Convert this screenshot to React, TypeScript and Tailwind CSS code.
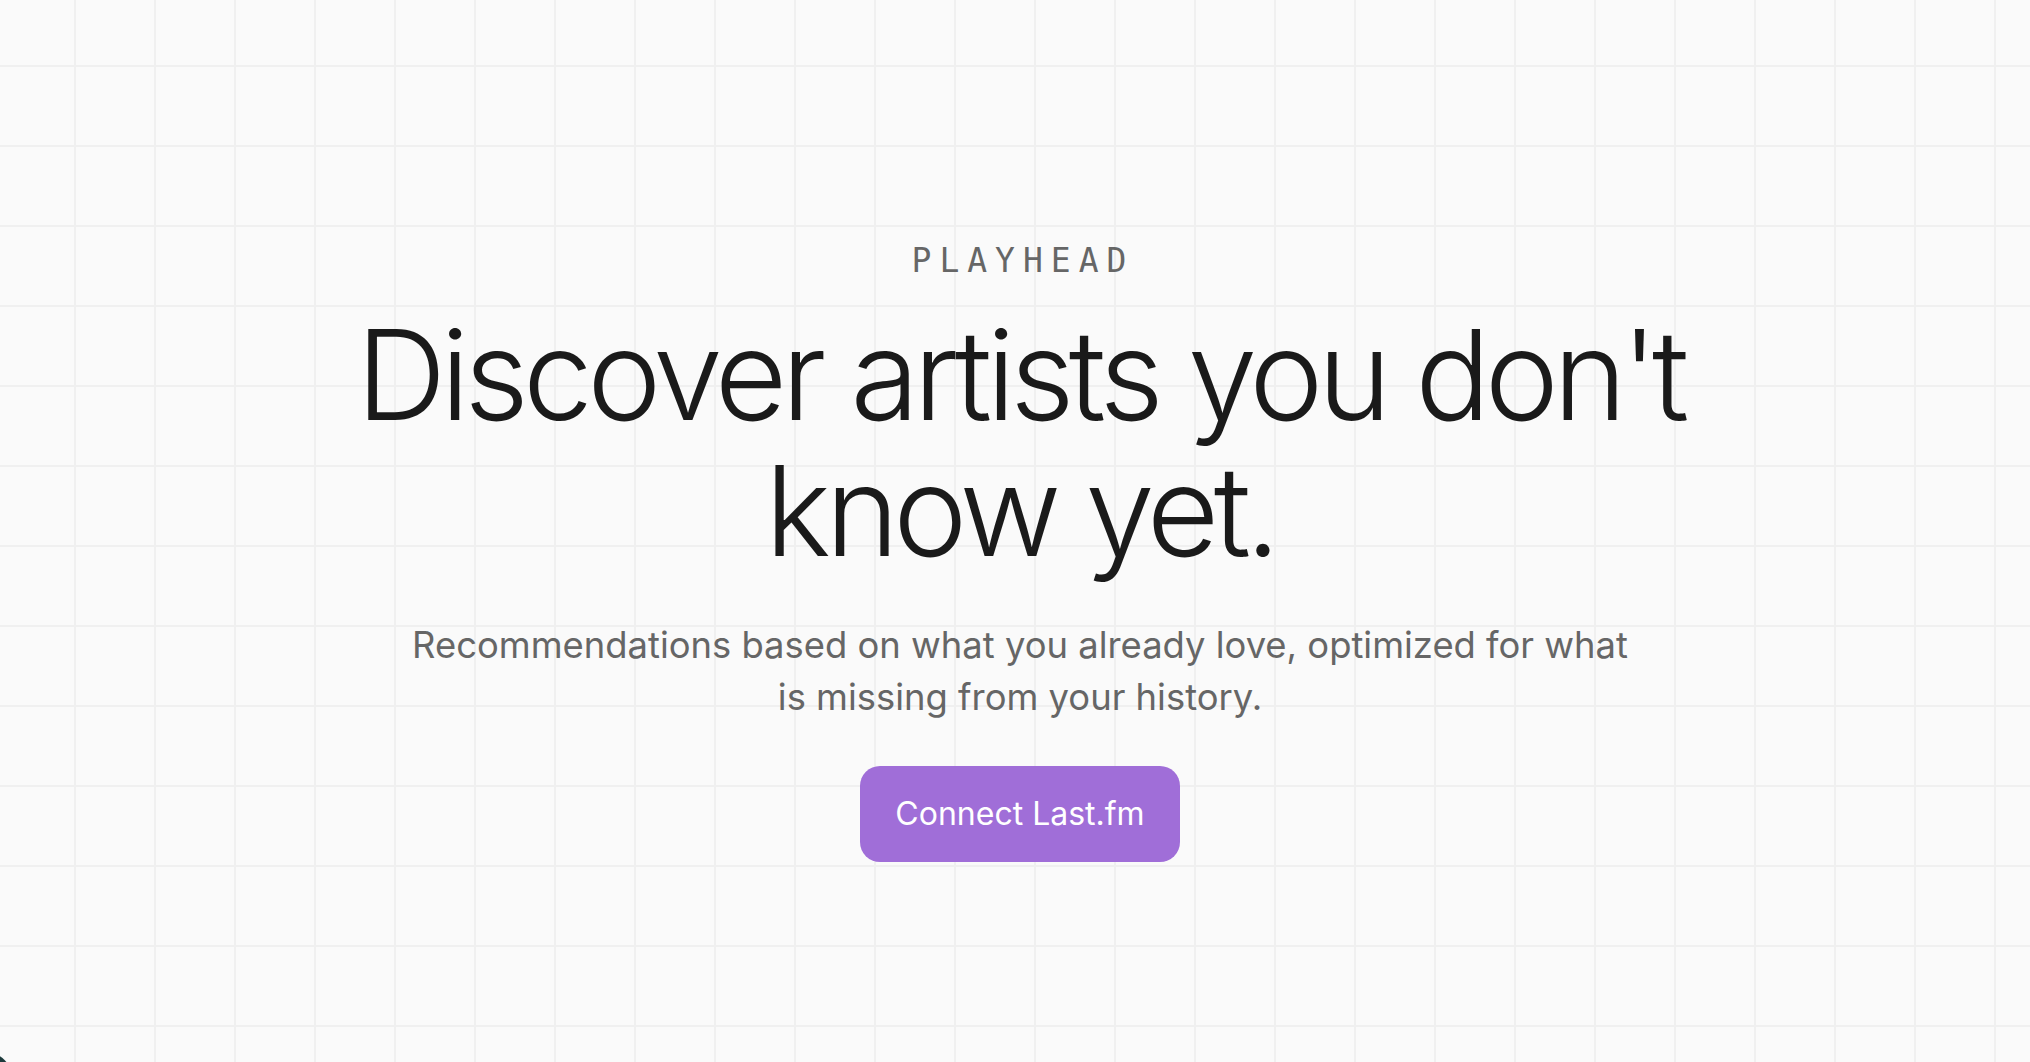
import React from 'react'

export default function App() {
  return (
    <div className="relative min-h-screen w-full overflow-hidden bg-[#fafafa] bg-[linear-gradient(to_right,#f0f0f0_2px,transparent_2px),linear-gradient(to_bottom,#f0f0f0_2px,transparent_2px)] bg-[size:80px_80px] bg-[position:74px_65px] font-[Inter,sans-serif]">
      <main className="flex flex-col items-center pl-[10px] pt-[244px] text-center">
        {/* Brand */}
        <p className="pl-[6px] font-['DejaVu_Sans_Mono',monospace] text-[33px] leading-none tracking-[8px] text-[#666666]">
          PLAYHEAD
        </p>

        {/* Headline */}
        <h1 className="mt-[30px] max-w-[1400px] text-[125px] font-light leading-[136px] tracking-[-0.045em] text-[#1a1a1a]">
          Discover artists you don't know yet.
        </h1>

        {/* Subtitle */}
        <p className="mt-[40px] max-w-[1240px] text-[36.4px] leading-[52px] text-[#666666]">
          Recommendations based on what you already love, optimized for what is missing from your history.
        </p>

        <button className="mt-[43px] flex h-[96px] items-center rounded-[20px] bg-[#a06ed8] px-[35px] text-[32px] text-white">
          Connect Last.fm
        </button>
      </main>

      {/* dev indicator peeking from the corner */}
      <div className="absolute -bottom-[46px] -left-[43px] h-[56px] w-[56px] rounded-full bg-[#1d3a3c]" />
    </div>
  )
}
